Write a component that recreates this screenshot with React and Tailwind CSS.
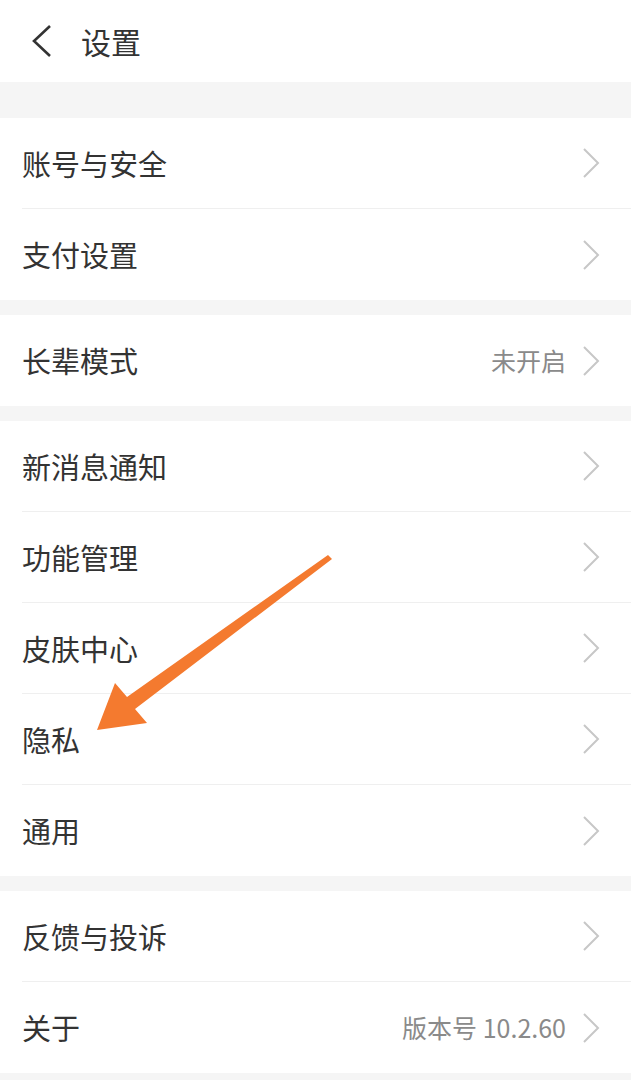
import React from 'react';

const Chevron = () => (
  <svg width="20" height="32" viewBox="0 0 20 32" fill="none" className="shrink-0">
    <path d="M3 2l14 14L3 30" stroke="#c7c7c7" strokeWidth="2" strokeLinejoin="miter" />
  </svg>
);

const Row = ({ label, value, last }) => (
  <div className="flex h-[91px] items-center pl-[22px]">
    <div className={`flex h-full flex-1 items-center pr-[30px] ${last ? '' : 'border-b border-[#efefef]'}`}>
      <span className="flex-1 text-[29px] leading-none text-[#333333]">{label}</span>
      {value && <span className="mr-[15px] text-[25px] leading-none text-[#8a8a8a]">{value}</span>}
      <Chevron />
    </div>
  </div>
);

const Group = ({ items }) => (
  <div className="bg-white">
    {items.map((it, i) => (
      <Row key={it.label} {...it} last={i === items.length - 1} />
    ))}
  </div>
);

const groups = [
  [{ label: '账号与安全' }, { label: '支付设置' }],
  [{ label: '长辈模式', value: '未开启' }],
  [{ label: '新消息通知' }, { label: '功能管理' }, { label: '皮肤中心' }, { label: '隐私' }, { label: '通用' }],
  [{ label: '反馈与投诉' }, { label: '关于', value: '版本号 10.2.60' }],
];

export default function App() {
  return (
    <div
      className="relative h-[1080px] w-[631px] overflow-hidden bg-[#f5f5f5]"
      style={{ fontFamily: '"Noto Sans CJK SC", "Noto Sans", sans-serif' }}
    >
      <div className="flex h-[82px] items-center bg-white pl-[30px]">
        <svg width="24" height="34" viewBox="0 0 24 34" fill="none">
          <path d="M20 2L4 17l16 15" stroke="#333333" strokeWidth="2.6" />
        </svg>
        <span className="ml-[27px] text-[30px] leading-none text-[#333333]">设置</span>
      </div>
      <div className="flex flex-col gap-[15px] pt-[36px]">
        {groups.map((g, i) => (
          <Group key={i} items={g} />
        ))}
      </div>
      <svg className="pointer-events-none absolute left-0 top-0" width="631" height="1080">
        <polygon
          points="328,555 332,559 135,709 147,723 97,730 115,683 127,697"
          fill="#f47a2f"
        />
      </svg>
    </div>
  );
}
